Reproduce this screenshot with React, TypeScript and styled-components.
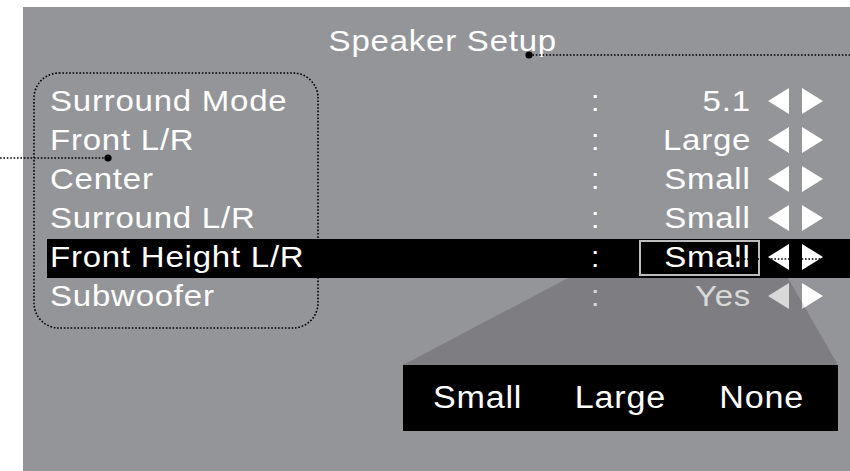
import React from "react";
import styled, { createGlobalStyle } from "styled-components";

const GlobalStyle = createGlobalStyle`
  html, body {
    margin: 0;
    padding: 0;
    background: #ffffff;
  }
  body {
    font-family: "Liberation Sans", Arial, Helvetica, sans-serif;
  }
`;

const Page = styled.div`
  position: relative;
  width: 850px;
  height: 471px;
  padding: 7px 0 0 23px;
  box-sizing: border-box;
  overflow: hidden;
`;

const Panel = styled.div`
  width: 827px;
  height: 464px;
  background: #949599;
  color: #ffffff;
  display: flex;
  flex-direction: column;
`;

/* wide sans text like the reference OSD font */
const Wide = styled.span<{ $origin?: string }>`
  display: inline-block;
  transform: scaleX(1.1);
  transform-origin: ${(p) => p.$origin || "left"} center;
  letter-spacing: 0.7px;
  white-space: nowrap;
`;

const Title = styled.div`
  height: 76px;
  box-sizing: border-box;
  padding: 16px 0 0 12px;
  text-align: center;
  font-size: 30px;
  line-height: 36px;
`;

const List = styled.div`
  margin-left: 24px;
  display: flex;
  flex-direction: column;
`;

const Row = styled.div<{ $active?: boolean }>`
  display: grid;
  grid-template-columns: 541px 12px 148px 1fr;
  align-items: center;
  height: 39px;
  box-sizing: border-box;
  padding: 0 0 4px 3px;
  background: ${(p) => (p.$active ? "#000000" : "transparent")};
  font-size: 30px;
  line-height: 35px;
  white-space: nowrap;
`;

const Label = styled.span``;

const Colon = styled.span``;

const Value = styled.span<{ $selected?: boolean }>`
  position: relative;
  text-align: right;
  &::after {
    content: "";
    display: ${(p) => (p.$selected ? "block" : "none")};
    position: absolute;
    left: 36px;
    right: -9px;
    top: 1px;
    bottom: -2px;
    border: 2px solid #bdbdbd;
  }
`;

const Arrows = styled.span`
  display: flex;
  align-items: center;
  gap: 13px;
  padding-left: 17px;
`;

const Popup = styled.div`
  margin: 48px 0 0 380px;
  width: 435px;
  height: 66px;
  box-sizing: border-box;
  background: #000000;
  display: flex;
  align-items: center;
  justify-content: space-between;
  padding: 0 34px 0 30px;
  font-size: 31px;
`;

const PopupItem = styled.span``;

const Overlay = styled.svg`
  position: absolute;
  top: 0;
  left: 0;
  pointer-events: none;
`;

const Arrow = ({ dir }: { dir: "left" | "right" }) => (
  <svg width="21" height="26" viewBox="0 0 21 26">
    {dir === "left" ? (
      <polygon points="21,0 0,13 21,26" fill="#ffffff" />
    ) : (
      <polygon points="0,0 21,13 0,26" fill="#ffffff" />
    )}
  </svg>
);

const rows = [
  { label: "Surround Mode", value: "5.1" },
  { label: "Front L/R", value: "Large" },
  { label: "Center", value: "Small" },
  { label: "Surround L/R", value: "Small" },
  { label: "Front Height L/R", value: "Small", active: true },
  { label: "Subwoofer", value: "Yes" },
];

export default function App() {
  return (
    <>
      <GlobalStyle />
      <Page>
        <Panel>
          <Title>
            <Wide $origin="center">Speaker Setup</Wide>
          </Title>
          <List>
            {rows.map((r) => (
              <Row key={r.label} $active={r.active}>
                <Label>
                  <Wide>{r.label}</Wide>
                </Label>
                <Colon>:</Colon>
                <Value $selected={r.active}>
                  <Wide $origin="right">{r.value}</Wide>
                </Value>
                <Arrows>
                  <Arrow dir="left" />
                  <Arrow dir="right" />
                </Arrows>
              </Row>
            ))}
          </List>
          <Popup>
            <PopupItem>
              <Wide $origin="left">Small</Wide>
            </PopupItem>
            <PopupItem>
              <Wide $origin="center">Large</Wide>
            </PopupItem>
            <PopupItem>
              <Wide $origin="right">None</Wide>
            </PopupItem>
          </Popup>
        </Panel>
        <Overlay width="850" height="471" viewBox="0 0 850 471">
          <polygon points="568,278 788,278 838,365 403,365" fill="rgba(0,0,0,0.15)" />
          <rect
            x="34"
            y="73"
            width="284"
            height="255"
            rx="25"
            ry="25"
            fill="none"
            stroke="#000"
            strokeWidth="1.6"
            strokeDasharray="1.6 1.8"
          />
          <line x1="0" y1="158" x2="108" y2="158" stroke="#000" strokeWidth="1.6" strokeDasharray="1.6 1.8" />
          <circle cx="108" cy="158" r="3.6" fill="#000" />
          <line x1="529" y1="55" x2="850" y2="55" stroke="#000" strokeWidth="1.6" strokeDasharray="1.6 1.8" />
          <circle cx="529" cy="55" r="3.6" fill="#000" />
          <line x1="737" y1="259" x2="823" y2="259" stroke="#000" strokeWidth="1.6" strokeDasharray="1.6 1.8" />
          <circle cx="737" cy="259" r="2.6" fill="#000" />
        </Overlay>
      </Page>
    </>
  );
}
